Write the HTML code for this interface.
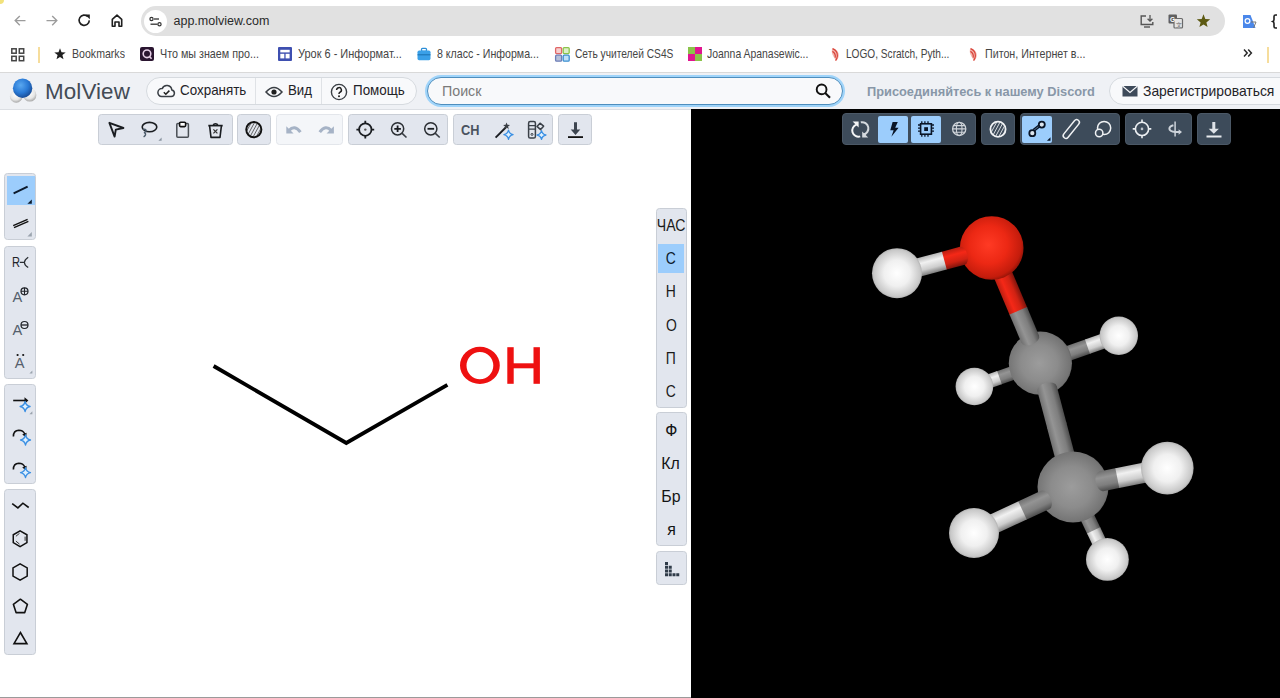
<!DOCTYPE html>
<html><head><meta charset="utf-8"><style>
html,body{margin:0;padding:0;width:1280px;height:698px;overflow:hidden;background:#fff;font-family:"Liberation Sans", sans-serif;}
svg{display:block}
</style></head><body>
<svg style="position:absolute;left:0px;top:0px;overflow:visible;" width="8" height="8" viewBox="0 0 8 8"><circle cx="0" cy="0" r="4" fill="#f2e27c"/></svg>
<svg style="position:absolute;left:12px;top:12px;overflow:visible;" width="16" height="16" viewBox="0 0 16 16"><path d="M13.5 8.6H3.2M7.8 4 3.2 8.6l4.6 4.6" fill="none" stroke="#9c9c9c" stroke-width="1.4"/></svg>
<svg style="position:absolute;left:44px;top:12px;overflow:visible;" width="16" height="16" viewBox="0 0 16 16"><path d="M2.5 8.6h10.3M8.2 4l4.6 4.6-4.6 4.6" fill="none" stroke="#9c9c9c" stroke-width="1.4"/></svg>
<svg style="position:absolute;left:76px;top:12px;overflow:visible;" width="16" height="16" viewBox="0 0 16 16"><path d="M13.3 8.4A5.1 5.1 0 1 1 11.8 4.6" fill="none" stroke="#1f1f1f" stroke-width="1.6"/><path d="M9.2 2.6h4.6v4.6z" fill="#1f1f1f"/></svg>
<svg style="position:absolute;left:109px;top:12px;overflow:visible;" width="16" height="16" viewBox="0 0 16 16"><path d="M3.3 14.2V7.4L8 3.2l4.7 4.2v6.8H10V10H6v4.2z" fill="none" stroke="#1f1f1f" stroke-width="1.6" stroke-linejoin="round"/></svg>
<div style="position:absolute;left:141px;top:6px;width:1084px;height:30px;background:#e1e1e1;border-radius:15px;"></div>
<svg style="position:absolute;left:144px;top:9.5px;overflow:visible;" width="23" height="23" viewBox="0 0 23 23"><circle cx="11.5" cy="11.5" r="11.5" fill="#fff"/><circle cx="7.5" cy="9" r="1.6" fill="none" stroke="#333" stroke-width="1.2"/><path d="M10 9h5" stroke="#333" stroke-width="1.3"/><circle cx="15.5" cy="14.2" r="1.6" fill="none" stroke="#333" stroke-width="1.2"/><path d="M6.5 14.2h7" stroke="#333" stroke-width="1.3"/></svg>
<div style="position:absolute;left:173.5px;top:14.29px;font-size:12.5px;line-height:14.36px;color:#2a2a2a;font-weight:400;white-space:nowrap;">app.molview.com</div>
<svg style="position:absolute;left:1139px;top:14px;overflow:visible;" width="16" height="14" viewBox="0 0 16 14"><path d="M7 2H2.2v8.5h11.6V8" fill="none" stroke="#555" stroke-width="1.4"/><path d="M5 13h6" stroke="#555" stroke-width="1.4"/><path d="M11 1v6M8.6 4.8 11 7.2l2.4-2.4" fill="none" stroke="#555" stroke-width="1.3"/></svg>
<svg style="position:absolute;left:1168px;top:14px;overflow:visible;" width="15" height="14" viewBox="0 0 15 14"><rect x="0.5" y="0.5" width="8.5" height="9" rx="1" fill="#5f5f5f"/><rect x="6" y="4.5" width="8.5" height="9.5" rx="1" fill="#e4e4e4" stroke="#6a6a6a" stroke-width="1.2"/><text x="2" y="8" font-size="6.5" font-weight="700" fill="#fff" font-family="Liberation Sans">G</text><text x="8" y="12.5" font-size="6" fill="#6a6a6a" font-family="Liberation Sans">文</text></svg>
<svg style="position:absolute;left:1196px;top:14px;overflow:visible;" width="15" height="13" viewBox="0 0 15 13"><path d="M7.5 0.3 9.3 4.9 14.2 5.2 10.4 8.4 11.6 13.1 7.5 10.5 3.4 13.1 4.6 8.4 0.8 5.2 5.7 4.9z" fill="#5d5a12"/></svg>
<svg style="position:absolute;left:1242px;top:14px;overflow:visible;" width="15" height="15" viewBox="0 0 15 15"><path d="M1 1h7.5l5 13H1z" fill="#4a87ea"/><circle cx="5.5" cy="7" r="2.4" fill="none" stroke="#fff" stroke-width="1.2"/><path d="M9 8h5l-2.5 6" fill="none" stroke="#777" stroke-width="1"/></svg>
<svg style="position:absolute;left:1272px;top:14px;overflow:visible;" width="10" height="15" viewBox="0 0 10 15"><path d="M5 1H3.5Q2 1 2 2.5v3Q2 7 0.8 7.5 2 8 2 9.5v3Q2 14 3.5 14H5" fill="none" stroke="#1f1f1f" stroke-width="1.6"/></svg>
<svg style="position:absolute;left:11px;top:48px;overflow:visible;" width="14" height="14" viewBox="0 0 14 14"><rect x="0.8" y="0.8" width="4.4" height="4.4" fill="none" stroke="#444" stroke-width="1.5"/><rect x="0.8" y="8.3" width="4.4" height="4.4" fill="none" stroke="#444" stroke-width="1.5"/><rect x="8.3" y="0.8" width="4.4" height="4.4" fill="none" stroke="#444" stroke-width="1.5"/><rect x="8.3" y="8.3" width="4.4" height="4.4" fill="none" stroke="#444" stroke-width="1.5"/></svg>
<div style="position:absolute;left:38px;top:47px;width:1.6px;height:16px;background:#f6dd9c;"></div>
<svg style="position:absolute;left:54px;top:48.2px;overflow:visible;" width="12" height="12" viewBox="0 0 12 12"><path d="M6 0.3 7.5 4.3 11.7 4.5 8.4 7.1 9.5 11.3 6 8.9 2.5 11.3 3.6 7.1 0.3 4.5 4.5 4.3z" fill="#1f1f1f"/></svg>
<div style="position:absolute;left:72px;top:47.16px;font-size:12.2px;line-height:14.02px;color:#454545;font-weight:400;white-space:nowrap;transform:scaleX(0.8686);transform-origin:0 0;">Bookmarks</div>
<svg style="position:absolute;left:140px;top:47px;overflow:visible;" width="14" height="14" viewBox="0 0 14 14"><rect width="14" height="14" rx="2" fill="#2a1530"/><circle cx="7" cy="6.8" r="3.8" fill="none" stroke="#e7d0e8" stroke-width="1.6"/><path d="M9.3 9.4l2.3 2.4" stroke="#e7d0e8" stroke-width="1.6"/></svg>
<div style="position:absolute;left:159.5px;top:47.16px;font-size:12.2px;line-height:14.02px;color:#454545;font-weight:400;white-space:nowrap;transform:scaleX(0.8814);transform-origin:0 0;">Что мы знаем про...</div>
<svg style="position:absolute;left:278px;top:47px;overflow:visible;" width="14" height="14" viewBox="0 0 14 14"><rect width="14" height="14" rx="1" fill="#3e4fb0"/><rect x="2.3" y="2.8" width="9.4" height="2.6" fill="#fff"/><rect x="2.3" y="6.8" width="4" height="4.6" fill="#fff"/><rect x="7.6" y="6.8" width="4" height="4.6" fill="#fff"/></svg>
<div style="position:absolute;left:297.5px;top:47.16px;font-size:12.2px;line-height:14.02px;color:#454545;font-weight:400;white-space:nowrap;transform:scaleX(0.9000);transform-origin:0 0;">Урок 6 - Информат...</div>
<svg style="position:absolute;left:417px;top:47px;overflow:visible;" width="14" height="14" viewBox="0 0 14 14"><rect x="4.5" y="1.3" width="5" height="3" rx="1" fill="none" stroke="#2d8fd8" stroke-width="1.3"/><rect x="0.5" y="3.6" width="13" height="9.6" rx="1.6" fill="#3aa0e8"/><rect x="0.5" y="7.3" width="13" height="1" fill="#1a6fb0"/></svg>
<div style="position:absolute;left:436.5px;top:47.16px;font-size:12.2px;line-height:14.02px;color:#454545;font-weight:400;white-space:nowrap;transform:scaleX(0.8714);transform-origin:0 0;">8 класс - Информа...</div>
<svg style="position:absolute;left:555px;top:47px;overflow:visible;" width="15" height="15" viewBox="0 0 15 15"><rect x="0.6" y="0.6" width="6" height="6" rx="1" fill="#f6d0d0" stroke="#e06666" stroke-width="1.3"/><rect x="8.2" y="0.6" width="6" height="6" rx="1" fill="#dcefc8" stroke="#8bc34a" stroke-width="1.3"/><rect x="0.6" y="8.2" width="6" height="6" rx="1" fill="#b8c0d8" stroke="#6d7fb8" stroke-width="1.3"/><rect x="8.2" y="8.2" width="6" height="6" rx="1" fill="#bfe0f8" stroke="#3d8fd0" stroke-width="1.3"/></svg>
<div style="position:absolute;left:574.5px;top:47.16px;font-size:12.2px;line-height:14.02px;color:#454545;font-weight:400;white-space:nowrap;transform:scaleX(0.8376);transform-origin:0 0;">Сеть учителей CS4S</div>
<svg style="position:absolute;left:688px;top:47px;overflow:visible;" width="14" height="14" viewBox="0 0 14 14"><rect width="14" height="14" fill="#e0158f"/><rect x="0" y="0" width="7" height="7" fill="#8bc34a"/><rect x="7" y="7" width="7" height="7" fill="#8bc34a"/></svg>
<div style="position:absolute;left:707px;top:47.16px;font-size:12.2px;line-height:14.02px;color:#454545;font-weight:400;white-space:nowrap;transform:scaleX(0.8551);transform-origin:0 0;">Joanna Apanasewic...</div>
<svg style="position:absolute;left:828.5px;top:46.5px;overflow:visible;" width="13" height="15" viewBox="0 0 13 15"><path d="M3.2 1.2C7.5 1.8 10 5 9.8 8.6 9.6 11.6 8 13.4 6.6 14 6.8 12.4 4.6 10 3.4 7.4 2.6 5.4 2.6 3.2 3.2 1.2z" fill="#f3b8b0"/><path d="M3.6 1.6C7 3 8.6 6 8.4 9 8.2 11 7.4 12.6 6.6 13.6M3.4 4.4C5.6 5.6 6.6 8 6.2 10.6" fill="none" stroke="#d9443a" stroke-width="1.2"/></svg>
<div style="position:absolute;left:845.5px;top:47.16px;font-size:12.2px;line-height:14.02px;color:#454545;font-weight:400;white-space:nowrap;transform:scaleX(0.8296);transform-origin:0 0;">LOGO, Scratch, Pyth...</div>
<svg style="position:absolute;left:966.5px;top:46.5px;overflow:visible;" width="13" height="15" viewBox="0 0 13 15"><path d="M3.2 1.2C7.5 1.8 10 5 9.8 8.6 9.6 11.6 8 13.4 6.6 14 6.8 12.4 4.6 10 3.4 7.4 2.6 5.4 2.6 3.2 3.2 1.2z" fill="#f3b8b0"/><path d="M3.6 1.6C7 3 8.6 6 8.4 9 8.2 11 7.4 12.6 6.6 13.6M3.4 4.4C5.6 5.6 6.6 8 6.2 10.6" fill="none" stroke="#d9443a" stroke-width="1.2"/></svg>
<div style="position:absolute;left:984.5px;top:47.16px;font-size:12.2px;line-height:14.02px;color:#454545;font-weight:400;white-space:nowrap;transform:scaleX(0.8769);transform-origin:0 0;">Питон, Интернет в...</div>
<svg style="position:absolute;left:1243px;top:48px;overflow:visible;" width="10" height="10" viewBox="0 0 10 10"><path d="M1 1.5 4.2 5 1 8.5M5.2 1.5 8.4 5 5.2 8.5" fill="none" stroke="#2a2a2a" stroke-width="1.5"/></svg>
<div style="position:absolute;left:1267px;top:47px;width:1.6px;height:16px;background:#f6dd9c;"></div>
<div style="position:absolute;left:0px;top:72px;width:1280px;height:1px;background:#d9d9d9;"></div>
<div style="position:absolute;left:0px;top:73px;width:1280px;height:36px;background:#eff1f5;"></div>
<div style="position:absolute;left:0px;top:109px;width:691px;height:1px;background:#dcdfe4;"></div>
<svg style="position:absolute;left:0px;top:74px;overflow:visible;" width="46" height="32" viewBox="0 0 46 32"><defs>
<radialGradient id="lb" cx="0.4" cy="0.35" r="0.65"><stop offset="0" stop-color="#5aa8f0"/><stop offset="0.6" stop-color="#2a7ad6"/><stop offset="1" stop-color="#1a4f9a"/></radialGradient>
<radialGradient id="lw" cx="0.45" cy="0.35" r="0.7"><stop offset="0" stop-color="#ffffff"/><stop offset="0.6" stop-color="#e6e6e6"/><stop offset="1" stop-color="#9a9a9a"/></radialGradient></defs>
<circle cx="16.2" cy="22.4" r="6.3" fill="url(#lw)"/><circle cx="29.8" cy="21" r="6.6" fill="url(#lw)"/><circle cx="22.6" cy="14.2" r="9.7" fill="url(#lb)"/></svg>
<div style="position:absolute;left:45px;top:78.53px;font-size:22.4px;line-height:25.74px;color:#434b55;font-weight:400;white-space:nowrap;letter-spacing:0.1px;">MolView</div>
<div style="position:absolute;left:145.5px;top:77px;width:271.5px;height:28px;box-sizing:border-box;background:#f8f9fb;border:1px solid #d6dadf;border-radius:14px;"></div>
<div style="position:absolute;left:255px;top:78px;width:1px;height:26px;background:#dfe2e6;"></div>
<div style="position:absolute;left:321px;top:78px;width:1px;height:26px;background:#dfe2e6;"></div>
<svg style="position:absolute;left:157px;top:84px;overflow:visible;" width="19" height="14" viewBox="0 0 19 14"><path d="M4.6 12.6h9.6a3.4 3.4 0 0 0 .6-6.7 5 5 0 0 0-9.6-1.3A4 4 0 0 0 4.6 12.6z" fill="none" stroke="#3a3f45" stroke-width="1.5" stroke-linejoin="round"/><path d="M6.8 8.3l2 1.9 3.6-3.6" fill="none" stroke="#1f1f1f" stroke-width="1.5"/></svg>
<div style="position:absolute;left:180.3px;top:83.22px;font-size:13.9px;line-height:15.97px;color:#1f2328;font-weight:400;white-space:nowrap;transform:scaleX(0.9646);transform-origin:0 0;">Сохранять</div>
<svg style="position:absolute;left:265px;top:86px;overflow:visible;" width="18" height="12" viewBox="0 0 18 12"><path d="M1 6Q9-3 17 6 9 15 1 6z" fill="none" stroke="#3a3f45" stroke-width="1.5"/><circle cx="9" cy="6" r="2.6" fill="#1f1f1f"/></svg>
<div style="position:absolute;left:288.3px;top:83.22px;font-size:13.9px;line-height:15.97px;color:#1f2328;font-weight:400;white-space:nowrap;transform:scaleX(0.9543);transform-origin:0 0;">Вид</div>
<svg style="position:absolute;left:330px;top:82.5px;overflow:visible;" width="18" height="18" viewBox="0 0 18 18"><circle cx="9" cy="9" r="7.6" fill="none" stroke="#3a3f45" stroke-width="1.4"/><path d="M6.6 7a2.4 2.4 0 1 1 3.4 2.2c-.8.4-1 .9-1 1.7" fill="none" stroke="#1f1f1f" stroke-width="1.5"/><circle cx="9" cy="13.2" r="1" fill="#1f1f1f"/></svg>
<div style="position:absolute;left:353.3px;top:83.22px;font-size:13.9px;line-height:15.97px;color:#1f2328;font-weight:400;white-space:nowrap;transform:scaleX(0.9649);transform-origin:0 0;">Помощь</div>
<div style="position:absolute;left:427px;top:77px;width:416px;height:28px;box-sizing:border-box;background:#f8f9fb;border:1px solid #4f8ebd;border-radius:14px;box-shadow:0 0 0 2px #9fd4fa;"></div>
<div style="position:absolute;left:442.3px;top:82.65px;font-size:14.2px;line-height:16.32px;color:#7a7a7a;font-weight:400;white-space:nowrap;transform:scaleX(1.0038);transform-origin:0 0;">Поиск</div>
<svg style="position:absolute;left:814px;top:82px;overflow:visible;" width="18" height="18" viewBox="0 0 18 18"><circle cx="7.6" cy="7.4" r="4.9" fill="none" stroke="#111" stroke-width="1.9"/><path d="M11.2 11l4.8 4.8" stroke="#111" stroke-width="2.1"/></svg>
<div style="position:absolute;left:866.5px;top:83.59px;font-size:13.6px;line-height:15.63px;color:#8897a8;font-weight:700;white-space:nowrap;transform:scaleX(0.9419);transform-origin:0 0;">Присоединяйтесь к нашему Discord</div>
<div style="position:absolute;left:1109px;top:77px;width:300px;height:28px;box-sizing:border-box;background:#f8f9fb;border:1px solid #d6dadf;border-radius:14px;"></div>
<svg style="position:absolute;left:1122px;top:85px;overflow:visible;" width="16" height="12" viewBox="0 0 16 12"><rect x="0.5" y="1" width="15" height="10.5" fill="#3e4a5a"/><path d="M0.5 1 8 7.5 15.5 1" fill="none" stroke="#f8f9fb" stroke-width="1.1"/></svg>
<div style="position:absolute;left:1143.3px;top:82.95px;font-size:14.2px;line-height:16.32px;color:#1f2328;font-weight:400;white-space:nowrap;transform:scaleX(0.9794);transform-origin:0 0;">Зарегистрироваться</div>
<div style="position:absolute;left:0px;top:110px;width:691px;height:588px;background:#ffffff;"></div>
<div style="position:absolute;left:0px;top:697px;width:691px;height:1px;background:#9a9a9a;"></div>
<div style="position:absolute;left:691px;top:109px;width:589px;height:589px;background:#000000;"></div>
<div style="position:absolute;left:98px;top:114px;width:135px;height:31px;box-sizing:border-box;background:#e2e6ee;border:1px solid #c9ced6;border-radius:3.5px;"></div>
<div style="position:absolute;left:237px;top:114px;width:34px;height:31px;box-sizing:border-box;background:#e2e6ee;border:1px solid #c9ced6;border-radius:3.5px;"></div>
<div style="position:absolute;left:276px;top:114px;width:67px;height:31px;box-sizing:border-box;background:#f4f6f9;border:1px solid #e3e6eb;border-radius:3.5px;"></div>
<div style="position:absolute;left:348px;top:114px;width:100px;height:31px;box-sizing:border-box;background:#e2e6ee;border:1px solid #c9ced6;border-radius:3.5px;"></div>
<div style="position:absolute;left:453px;top:114px;width:100px;height:31px;box-sizing:border-box;background:#e2e6ee;border:1px solid #c9ced6;border-radius:3.5px;"></div>
<div style="position:absolute;left:558px;top:114px;width:34px;height:31px;box-sizing:border-box;background:#e2e6ee;border:1px solid #c9ced6;border-radius:3.5px;"></div>
<svg style="position:absolute;left:100px;top:114px;overflow:visible;" width="33" height="31" viewBox="0 0 33 31"><path d="M9.4 8.8 23.4 14 15.8 15.6 14.6 22.6z" fill="none" stroke="#1a1d21" stroke-width="1.9" stroke-linejoin="round"/></svg>
<svg style="position:absolute;left:133px;top:114px;overflow:visible;" width="33" height="31" viewBox="0 0 33 31"><ellipse cx="16.5" cy="13.1" rx="7.3" ry="4.7" fill="none" stroke="#1a1d21" stroke-width="1.6"/><path d="M10 15.4c1.6-.6 3.4.2 3 1.8-.3 1-1.4 1.2-2 1.4 1.2.2 1.8 1.2 1.4 2.4-.3.8-1 1.4-1.8 1.8" fill="none" stroke="#4b5a6a" stroke-width="1.5"/><path d="M28.6 26.8v-3.2l-3.2 3.2z" fill="#8a94a0"/></svg>
<svg style="position:absolute;left:166px;top:114px;overflow:visible;" width="33" height="31" viewBox="0 0 33 31"><rect x="10.8" y="9.6" width="11.6" height="13.6" rx="1" fill="none" stroke="#4a4f55" stroke-width="1.5"/><rect x="13.6" y="8.2" width="6" height="4.4" rx="1" fill="#fff" stroke="#111" stroke-width="1.6"/></svg>
<svg style="position:absolute;left:199px;top:114px;overflow:visible;" width="33" height="31" viewBox="0 0 33 31"><path d="M9.3 11.6h14.4" stroke="#1a1d21" stroke-width="1.7"/><path d="M14.2 11.4a2.4 2.4 0 0 1 4.6 0" fill="none" stroke="#1a1d21" stroke-width="1.6"/><path d="M10.6 11.8 12 23.4h9l1.4-11.6" fill="none" stroke="#1a1d21" stroke-width="1.6" stroke-linejoin="round"/><path d="M14.4 15.4l4 4m0-4-4 4" stroke="#333" stroke-width="1.2"/></svg>
<svg style="position:absolute;left:237px;top:114px;overflow:visible;" width="34" height="31" viewBox="0 0 34 31"><clipPath id="hc1"><circle cx="16.8" cy="15.6" r="7"/></clipPath><g clip-path="url(#hc1)" stroke="#555" stroke-width="0.9"><path d="M-1.6000000000000014 26 L10.399999999999999 4"/><path d="M1.5999999999999996 26 L13.6 4"/><path d="M4.8 26 L16.8 4"/><path d="M8.0 26 L20.0 4"/><path d="M11.2 26 L23.2 4"/><path d="M14.4 26 L26.4 4"/><path d="M17.6 26 L29.6 4"/><path d="M20.8 26 L32.8 4"/></g><circle cx="16.8" cy="15.6" r="7.6" fill="none" stroke="#111" stroke-width="1.9"/></svg>
<svg style="position:absolute;left:276px;top:114px;overflow:visible;" width="67" height="31" viewBox="0 0 67 31"><g id="und"><path d="M10.3 12.2V19.6H17.6z" fill="#a6b3c6"/><path d="M13 16.6Q18.5 10.2 24.4 18.2" fill="none" stroke="#a6b3c6" stroke-width="3.1"/></g><g transform="translate(68.15 0) scale(-1 1)"><path d="M10.3 12.2V19.6H17.6z" fill="#a6b3c6"/><path d="M13 16.6Q18.5 10.2 24.4 18.2" fill="none" stroke="#a6b3c6" stroke-width="3.1"/></g></svg>
<svg style="position:absolute;left:348px;top:114px;overflow:visible;" width="100" height="31" viewBox="0 0 100 31"><circle cx="17.3" cy="15.6" r="6.2" fill="none" stroke="#1a1d21" stroke-width="1.8"/><path d="M17.3 6.7v2.8M17.3 21.7v2.8M8.4 15.6h2.8M23.4 15.6h2.8" stroke="#1a1d21" stroke-width="1.8"/><circle cx="17.3" cy="15.6" r="1.2" fill="#555"/><circle cx="49.6" cy="14.8" r="6.1" fill="none" stroke="#2a2e33" stroke-width="1.5"/><path d="M46.3 14.8h6.6M49.6 11.5v6.6" stroke="#1a1d21" stroke-width="1.8"/><path d="M53.9 19.1l4.6 4.4" stroke="#3a3f45" stroke-width="1.6"/><circle cx="82.8" cy="14.8" r="6.1" fill="none" stroke="#2a2e33" stroke-width="1.5"/><path d="M79.5 14.8h6.6" stroke="#1a1d21" stroke-width="1.8"/><path d="M87.1 19.1l4.6 4.4" stroke="#3a3f45" stroke-width="1.6"/></svg>
<div style="position:absolute;left:461px;top:121.44px;font-size:15.2px;line-height:17.46px;color:#4a5360;font-weight:700;white-space:nowrap;transform:scaleX(0.84);transform-origin:0 0;">CH</div>
<svg style="position:absolute;left:453px;top:114px;overflow:visible;" width="100" height="31" viewBox="0 0 100 31"><path d="M42.6 23.6 53.2 13" stroke="#1a1d21" stroke-width="1.9"/><path d="M53.5 8.4l1 2.3 2.5.2-1.9 1.6.6 2.4-2.2-1.3-2.1 1.3.6-2.4-1.9-1.6 2.5-.2z" fill="#3a3f45"/><path d="M55.5 16.1Q56.328 19.872 60.1 20.7Q56.328 21.528 55.5 25.299999999999997Q54.672 21.528 50.9 20.7Q54.672 19.872 55.5 16.1z" fill="#dff1ff" stroke="#3a8fe3" stroke-width="1.3" stroke-linejoin="round"/><rect x="75.6" y="7.6" width="6.8" height="16.4" rx="1.6" fill="none" stroke="#3a4048" stroke-width="1.5"/><path d="M75.6 11.6h6.8M75.6 15.2h6.8" stroke="#3a4048" stroke-width="1.3"/><circle cx="79" cy="20.4" r="1" fill="none" stroke="#3a4048" stroke-width="1"/><path d="M84 12.4l3-3.2 3.6 3-3 3.4z" fill="none" stroke="#3a4048" stroke-width="1.5" stroke-linejoin="round"/><path d="M88.5 16.6Q89.292 20.208 92.9 21Q89.292 21.792 88.5 25.4Q87.708 21.792 84.1 21Q87.708 20.208 88.5 16.6z" fill="#dff1ff" stroke="#3a8fe3" stroke-width="1.3" stroke-linejoin="round"/></svg>
<svg style="position:absolute;left:558px;top:114px;overflow:visible;" width="34" height="31" viewBox="0 0 34 31"><path d="M16 8.3h3v7.2h3.3L17.5 21 12.7 15.5H16z" fill="#3d4550"/><rect x="10" y="22.2" width="15" height="1.8" fill="#111"/></svg>
<div style="position:absolute;left:4px;top:173px;width:32px;height:67px;box-sizing:border-box;background:#e2e6ee;border:1px solid #c9ced6;border-radius:3.5px;"></div>
<div style="position:absolute;left:7px;top:175.7px;width:27.5px;height:29.3px;background:#9ccdfc;"></div>
<div style="position:absolute;left:4px;top:246px;width:32px;height:133px;box-sizing:border-box;background:#e2e6ee;border:1px solid #c9ced6;border-radius:3.5px;"></div>
<div style="position:absolute;left:4px;top:384px;width:32px;height:100px;box-sizing:border-box;background:#e2e6ee;border:1px solid #c9ced6;border-radius:3.5px;"></div>
<div style="position:absolute;left:4px;top:489px;width:32px;height:166px;box-sizing:border-box;background:#e2e6ee;border:1px solid #c9ced6;border-radius:3.5px;"></div>
<svg style="position:absolute;left:4px;top:173px;overflow:visible;" width="32" height="67" viewBox="0 0 32 67"><path d="M9.6 20.3 23.6 13.6" stroke="#0c1a2c" stroke-width="2"/><path d="M27.8 30.8v-4.4l-4.4 4.4z" fill="#0c1a2c"/><path d="M9.2 52.6 23.6 46.4M10 54.6 24.4 48.4" stroke="#111" stroke-width="1.4"/><path d="M27.8 63.4v-4.4l-4.4 4.4z" fill="#9aa3ad"/></svg>
<div style="position:absolute;left:12.3px;top:254.51px;font-size:13.8px;line-height:15.86px;color:#1f2328;font-weight:400;white-space:nowrap;transform:scaleX(0.8027);transform-origin:0 0;">R</div>
<svg style="position:absolute;left:4px;top:246px;overflow:visible;" width="32" height="133" viewBox="0 0 32 133"><path d="M15.8 16.4h4.4M24.2 11.2q-3.8 2.6-3.8 5.2t3.8 5.2" fill="none" stroke="#2a2e33" stroke-width="1.2"/><circle cx="20.5" cy="45.3" r="3.5" fill="none" stroke="#1f2328" stroke-width="1.2"/><path d="M17 45.3h7M20.5 41.8v7" stroke="#1f2328" stroke-width="1.1"/><circle cx="20.5" cy="79" r="3.5" fill="none" stroke="#1f2328" stroke-width="1.2"/><path d="M17 79h7" stroke="#1f2328" stroke-width="1.3"/><circle cx="13.6" cy="109" r="1.1" fill="#111"/><circle cx="19.2" cy="109" r="1.1" fill="#111"/><path d="M28.4 127.6v-3l-3 3z" fill="#9aa3ad"/></svg>
<div style="position:absolute;left:12.4px;top:289.49px;font-size:14.6px;line-height:16.78px;color:#55606c;font-weight:400;white-space:nowrap;">A</div>
<div style="position:absolute;left:12.4px;top:322.39px;font-size:14.6px;line-height:16.78px;color:#55606c;font-weight:400;white-space:nowrap;">A</div>
<div style="position:absolute;left:14.8px;top:355.49px;font-size:14.6px;line-height:16.78px;color:#55606c;font-weight:400;white-space:nowrap;">A</div>
<svg style="position:absolute;left:4px;top:384px;overflow:visible;" width="32" height="100" viewBox="0 0 32 100"><path d="M9.2 16.5h13" stroke="#111" stroke-width="1.6"/><path d="M20.5 13.3 24.4 16.5 20.5 19.7z" fill="#111"/><path d="M21.1 17.5Q22.0 21.6 26.1 22.5Q22.0 23.4 21.1 27.5Q20.200000000000003 23.4 16.1 22.5Q20.200000000000003 21.6 21.1 17.5z" fill="#dff1ff" stroke="#3a8fe3" stroke-width="1.3" stroke-linejoin="round"/><path d="M28.4 30.2v-3l-3 3z" fill="#9aa3ad"/><path d="M9.4 52.4q0-6 5.4-6.2 4.4 0 6 3.8" fill="none" stroke="#111" stroke-width="1.6"/><path d="M18.2 50.4l4.4-1.6-.4 4.8z" fill="#111"/><path d="M21.5 51Q22.4 55.1 26.5 56Q22.4 56.9 21.5 61Q20.6 56.9 16.5 56Q20.6 55.1 21.5 51z" fill="#dff1ff" stroke="#3a8fe3" stroke-width="1.3" stroke-linejoin="round"/><path d="M9.4 85.4q0-6 5.4-6.2 4.4 0 6 3.8" fill="none" stroke="#111" stroke-width="1.6"/><path d="M18.2 83.4l4.4-1.6-.4 4.8z" fill="#111"/><path d="M21.5 83.7Q22.4 87.8 26.5 88.7Q22.4 89.60000000000001 21.5 93.7Q20.6 89.60000000000001 16.5 88.7Q20.6 87.8 21.5 83.7z" fill="#dff1ff" stroke="#3a8fe3" stroke-width="1.3" stroke-linejoin="round"/></svg>
<svg style="position:absolute;left:4px;top:489px;overflow:visible;" width="32" height="166" viewBox="0 0 32 166"><path d="M8.2 14.6 13.9 18.9 18.9 14.2 24.7 18.5" fill="none" stroke="#111" stroke-width="1.6"/><polygon points="16.10,41.80 22.94,45.75 22.94,53.65 16.10,57.60 9.26,53.65 9.26,45.75" fill="none" stroke="#111" stroke-width="1.5"/><path d="M21.1 47.6V51.8M11.9 47.3 15.5 44.3M15.5 55.1 11.9 52.1" stroke="#333" stroke-width="1"/><polygon points="16.10,74.80 23.20,78.90 23.20,87.10 16.10,91.20 9.00,87.10 9.00,78.90" fill="none" stroke="#111" stroke-width="1.5"/><polygon points="16.40,110.20 23.44,115.31 20.75,123.59 12.05,123.59 9.36,115.31" fill="none" stroke="#111" stroke-width="1.6" stroke-linejoin="round"/><path d="M16.4 143.5 22.9 154.6H10z" fill="none" stroke="#111" stroke-width="1.6"/></svg>
<div style="position:absolute;left:655.5px;top:208px;width:31.5px;height:199.5px;box-sizing:border-box;background:#e2e6ee;border:1px solid #c9ced6;border-radius:3.5px;"></div>
<div style="position:absolute;left:658.2px;top:244px;width:26.2px;height:28.8px;background:#9ccdfc;"></div>
<div style="position:absolute;left:655.5px;top:412px;width:31.5px;height:133.5px;box-sizing:border-box;background:#e2e6ee;border:1px solid #c9ced6;border-radius:3.5px;"></div>
<div style="position:absolute;left:655.5px;top:551px;width:31.5px;height:33.5px;box-sizing:border-box;background:#e2e6ee;border:1px solid #c9ced6;border-radius:3.5px;"></div>
<div style="position:absolute;left:653.82px;width:34.17px;top:215.60px;font-size:16.8px;line-height:19.30px;color:#1a1a1a;white-space:nowrap;transform:scaleX(0.84);transform-origin:50% 0;">ЧАС</div>
<div style="position:absolute;left:665.35px;width:11.70px;top:248.64px;font-size:16.2px;line-height:18.61px;color:#0c1a2c;white-space:nowrap;transform:scaleX(0.86);transform-origin:50% 0;">C</div>
<div style="position:absolute;left:665.35px;width:11.70px;top:282.44px;font-size:16.2px;line-height:18.61px;color:#1a1a1a;white-space:nowrap;transform:scaleX(0.86);transform-origin:50% 0;">H</div>
<div style="position:absolute;left:664.90px;width:12.60px;top:315.74px;font-size:16.2px;line-height:18.61px;color:#1a1a1a;white-space:nowrap;transform:scaleX(0.86);transform-origin:50% 0;">O</div>
<div style="position:absolute;left:665.38px;width:11.64px;top:348.94px;font-size:16.2px;line-height:18.61px;color:#1a1a1a;white-space:nowrap;transform:scaleX(0.86);transform-origin:50% 0;">П</div>
<div style="position:absolute;left:665.35px;width:11.70px;top:381.94px;font-size:16.2px;line-height:18.61px;color:#1a1a1a;white-space:nowrap;transform:scaleX(0.86);transform-origin:50% 0;">C</div>
<div style="position:absolute;left:664.77px;width:12.47px;top:420.76px;font-size:16.4px;line-height:18.84px;color:#141414;white-space:nowrap;transform:scaleX(0.97);transform-origin:50% 0;">Ф</div>
<div style="position:absolute;left:661.44px;width:19.12px;top:453.76px;font-size:16.4px;line-height:18.84px;color:#141414;white-space:nowrap;transform:scaleX(0.97);transform-origin:50% 0;">Кл</div>
<div style="position:absolute;left:661.06px;width:19.88px;top:486.76px;font-size:16.4px;line-height:18.84px;color:#141414;white-space:nowrap;transform:scaleX(0.97);transform-origin:50% 0;">Бр</div>
<div style="position:absolute;left:666.56px;width:8.88px;top:519.76px;font-size:16.4px;line-height:18.84px;color:#141414;white-space:nowrap;transform:scaleX(0.97);transform-origin:50% 0;">я</div>
<svg style="position:absolute;left:0px;top:0px;overflow:visible;" width="1" height="1" viewBox="0 0 1 1"><rect x="665.00" y="562.00" width="3" height="3" fill="#2f3b48"/><rect x="665.00" y="565.75" width="3" height="3" fill="#2f3b48"/><rect x="668.75" y="565.75" width="3" height="3" fill="#2f3b48"/><rect x="665.00" y="569.50" width="3" height="3" fill="#2f3b48"/><rect x="668.75" y="569.50" width="3" height="3" fill="#2f3b48"/><rect x="665.00" y="573.25" width="3" height="3" fill="#2f3b48"/><rect x="668.75" y="573.25" width="3" height="3" fill="#2f3b48"/><rect x="672.50" y="573.25" width="3" height="3" fill="#2f3b48"/><rect x="676.25" y="573.25" width="3" height="3" fill="#2f3b48"/></svg>
<svg style="position:absolute;left:0px;top:0px;overflow:visible;" width="1" height="1" viewBox="0 0 1 1"><polyline points="213.6,366 346.3,443 447.4,384.8" fill="none" stroke="#000" stroke-width="3.8" stroke-linejoin="miter"/><path d="M460 365.4a19.9 18.6 0 1 0 39.8 0a19.9 18.6 0 1 0-39.8 0zM466.5 365.6a13.4 13.6 0 1 1 26.8 0a13.4 13.6 0 1 1-26.8 0z" fill="#ee1111" fill-rule="evenodd"/><rect x="507.3" y="347.2" width="6.4" height="36.6" fill="#ee1111"/><rect x="533.5" y="347.2" width="6.4" height="36.6" fill="#ee1111"/><rect x="510" y="363.3" width="26" height="5" fill="#ee1111"/></svg>
<div style="position:absolute;left:842px;top:113px;width:134px;height:32px;box-sizing:border-box;background:#3d4b5a;border:1px solid #4b5866;border-radius:4px;"></div>
<div style="position:absolute;left:980.5px;top:113px;width:34px;height:32px;box-sizing:border-box;background:#3d4b5a;border:1px solid #4b5866;border-radius:4px;"></div>
<div style="position:absolute;left:1019.5px;top:113px;width:100.5px;height:32px;box-sizing:border-box;background:#3d4b5a;border:1px solid #4b5866;border-radius:4px;"></div>
<div style="position:absolute;left:1124.5px;top:113px;width:67px;height:32px;box-sizing:border-box;background:#3d4b5a;border:1px solid #4b5866;border-radius:4px;"></div>
<div style="position:absolute;left:1196.5px;top:113px;width:34px;height:32px;box-sizing:border-box;background:#3d4b5a;border:1px solid #4b5866;border-radius:4px;"></div>
<div style="position:absolute;left:877.8px;top:115.7px;width:30px;height:27.3px;background:#9ccdfc;border-radius:2px;"></div>
<div style="position:absolute;left:911.1px;top:115.7px;width:30px;height:27.3px;background:#9ccdfc;border-radius:2px;"></div>
<div style="position:absolute;left:1021.8px;top:115.6px;width:30px;height:27px;background:#9ccdfc;border-radius:2px;"></div>
<svg style="position:absolute;left:0px;top:0px;overflow:visible;" width="1" height="1" viewBox="0 0 1 1"><path d="M856.6 124.6A6.1 6.1 0 0 0 860.2 136.4" fill="none" stroke="#f4f5f6" stroke-width="2"/><path d="M852.6 121.4H858.6V127.4z" fill="#f4f5f6"/><path d="M860.8 122.3A6.1 6.1 0 0 1 863.4 134.6" fill="none" stroke="#d4d9de" stroke-width="2"/><path d="M862.2 131.6V137.6H868.2z" fill="#d4d9de"/><path d="M892.6 122 890.3 130.2h3.3l-2.2 6.6 7.2-9h-3.4l2.6-5.8z" fill="#0a1628"/><rect x="920.6" y="123.8" width="10.8" height="10.4" fill="none" stroke="#0a1628" stroke-width="1.6"/><rect x="924.2" y="127.2" width="3.8" height="3.8" fill="#0a1628"/><path d="M921.8 121.2v2.6M921.8 134.2v2.6M918 125.0h2.6M931.4 125.0h2.6" stroke="#0a1628" stroke-width="1.3"/><path d="M924.9 121.2v2.6M924.9 134.2v2.6M918 128.1h2.6M931.4 128.1h2.6" stroke="#0a1628" stroke-width="1.3"/><path d="M928.0 121.2v2.6M928.0 134.2v2.6M918 131.2h2.6M931.4 131.2h2.6" stroke="#0a1628" stroke-width="1.3"/><circle cx="959.2" cy="128.9" r="6.6" fill="none" stroke="#cfd4d9" stroke-width="1.3"/><ellipse cx="959.2" cy="128.9" rx="2.8" ry="6.6" fill="none" stroke="#cfd4d9" stroke-width="1.1"/><path d="M952.6 128.9h13.2M953.6 125.6h11.2M953.6 132.2h11.2" stroke="#cfd4d9" stroke-width="1.1"/><clipPath id="hc2"><circle cx="998" cy="129.3" r="7.2"/></clipPath><g clip-path="url(#hc2)" stroke="#d8dce0" stroke-width="1"><path d="M976.1 142 L990.1 116"/><path d="M979.4 142 L993.4 116"/><path d="M982.7 142 L996.7 116"/><path d="M986.0 142 L1000.0 116"/><path d="M989.3 142 L1003.3 116"/><path d="M992.6 142 L1006.6 116"/><path d="M995.9 142 L1009.9 116"/><path d="M999.2 142 L1013.2 116"/><path d="M1002.5 142 L1016.5 116"/></g><circle cx="998" cy="129.3" r="7.6" fill="none" stroke="#f0f2f4" stroke-width="1.8"/><path d="M1034.4 131 1039.8 126.6M1033.2 129.6 1038.6 125.2" stroke="#0a1628" stroke-width="1.4"/><circle cx="1032.3" cy="133.2" r="3" fill="#dde6ef" stroke="#0a1628" stroke-width="1.8"/><circle cx="1041.8" cy="124.6" r="3" fill="#dde6ef" stroke="#0a1628" stroke-width="1.8"/><path d="M1050.5 140.8v-3.6l-3.6 3.6z" fill="#0a1628"/><path d="M1066 135.6 1076.6 122.4" stroke="#f0f2f4" stroke-width="7" stroke-linecap="round"/><path d="M1066 135.6 1076.6 122.4" stroke="#3d4b5a" stroke-width="4" stroke-linecap="round"/><circle cx="1104.1" cy="128" r="6.6" fill="none" stroke="#f0f2f4" stroke-width="1.5"/><circle cx="1099.2" cy="133" r="3.7" fill="#3d4b5a" stroke="#f0f2f4" stroke-width="1.5"/><circle cx="1142" cy="128.9" r="6.6" fill="none" stroke="#eceff2" stroke-width="1.6"/><path d="M1142 119.6v2.6M1142 135.6v2.6M1132.7 128.9h2.6M1148.7 128.9h2.6" stroke="#eceff2" stroke-width="1.6"/><circle cx="1142" cy="128.9" r="1.3" fill="#c0c6cc"/><path d="M1175.1 121.4v15" stroke="#cdd3da" stroke-width="1.5"/><path d="M1173.4 125.2q-4 1-4 3.6t6 3.2h5" fill="none" stroke="#cdd3da" stroke-width="2"/><path d="M1178.6 129.2l3.4 2.8-3.4 2.8z" fill="#cdd3da"/><path d="M1212.3 122h3v6.8h3.6l-5.1 5-5.1-5h3.6z" fill="#dfe3e8"/><rect x="1206.5" y="135.5" width="15" height="2" fill="#e8ebee"/></svg>
<svg style="position:absolute;left:0px;top:0px;overflow:visible;" width="1" height="1" viewBox="0 0 1 1">
<radialGradient id="gR" cx="0.45" cy="0.45" r="0.6"><stop offset="0" stop-color="#ff3a24"/><stop offset="0.5" stop-color="#ec2814"/><stop offset="0.85" stop-color="#c41c0c"/><stop offset="1" stop-color="#7a1006"/></radialGradient>
<radialGradient id="gW" cx="0.5" cy="0.5" r="0.58"><stop offset="0" stop-color="#ffffff"/><stop offset="0.45" stop-color="#f0f0f0"/><stop offset="0.8" stop-color="#c8c8c8"/><stop offset="1" stop-color="#808080"/></radialGradient>
<radialGradient id="gG" cx="0.48" cy="0.5" r="0.58"><stop offset="0" stop-color="#9c9c9c"/><stop offset="0.5" stop-color="#8c8c8c"/><stop offset="0.85" stop-color="#747474"/><stop offset="1" stop-color="#4a4a4a"/></radialGradient>
<linearGradient id="bg1" x1="0" y1="1" x2="0" y2="0"><stop offset="0" stop-color="#4d4d4d"/><stop offset="0.3" stop-color="#7e7e7e"/><stop offset="0.68" stop-color="#949494"/><stop offset="1" stop-color="#707070"/></linearGradient><linearGradient id="bg2" x1="0" y1="1" x2="0" y2="0"><stop offset="0" stop-color="#7d7d7d"/><stop offset="0.3" stop-color="#cdcdcd"/><stop offset="0.68" stop-color="#f1f1f1"/><stop offset="1" stop-color="#b6b6b6"/></linearGradient><g transform="translate(1040.4 363.2) rotate(-19.329)"><rect x="0.00" y="-7.5" width="50.85" height="15" fill="url(#bg1)"/><rect x="49.85" y="-7.5" width="33.23" height="15" fill="url(#bg2)"/></g><linearGradient id="bg3" x1="0" y1="0" x2="0" y2="1"><stop offset="0" stop-color="#4d4d4d"/><stop offset="0.3" stop-color="#7e7e7e"/><stop offset="0.68" stop-color="#949494"/><stop offset="1" stop-color="#707070"/></linearGradient><linearGradient id="bg4" x1="0" y1="0" x2="0" y2="1"><stop offset="0" stop-color="#7d7d7d"/><stop offset="0.3" stop-color="#cdcdcd"/><stop offset="0.68" stop-color="#f1f1f1"/><stop offset="1" stop-color="#b6b6b6"/></linearGradient><g transform="translate(1040.4 363.2) rotate(160.555)"><rect x="0.00" y="-7.0" width="44.40" height="14" fill="url(#bg3)"/><rect x="43.40" y="-7.0" width="26.60" height="14" fill="url(#bg4)"/></g><circle cx="1118.8" cy="335.7" r="19.2" fill="url(#gW)"/><circle cx="974.4" cy="386.5" r="18.8" fill="url(#gW)"/><circle cx="1040.4" cy="363.2" r="31.6" fill="url(#gG)"/><linearGradient id="bg5" x1="0" y1="0" x2="0" y2="1"><stop offset="0" stop-color="#7f140c"/><stop offset="0.3" stop-color="#d02213"/><stop offset="0.68" stop-color="#f52817"/><stop offset="1" stop-color="#b91e11"/></linearGradient><linearGradient id="bg6" x1="0" y1="0" x2="0" y2="1"><stop offset="0" stop-color="#4d4d4d"/><stop offset="0.3" stop-color="#7e7e7e"/><stop offset="0.68" stop-color="#949494"/><stop offset="1" stop-color="#707070"/></linearGradient><g transform="translate(991.7 248) rotate(67.084)"><ellipse cx="99.18" cy="0" rx="5.32" ry="9.5" fill="url(#bg6)"/><rect x="0.00" y="-9.5" width="69.16" height="19" fill="url(#bg5)"/><rect x="68.16" y="-9.5" width="31.02" height="19" fill="url(#bg6)"/></g><linearGradient id="bg7" x1="0" y1="0" x2="0" y2="1"><stop offset="0" stop-color="#4d4d4d"/><stop offset="0.3" stop-color="#7e7e7e"/><stop offset="0.68" stop-color="#949494"/><stop offset="1" stop-color="#707070"/></linearGradient><linearGradient id="bg8" x1="0" y1="0" x2="0" y2="1"><stop offset="0" stop-color="#4d4d4d"/><stop offset="0.3" stop-color="#7e7e7e"/><stop offset="0.68" stop-color="#949494"/><stop offset="1" stop-color="#707070"/></linearGradient><g transform="translate(1040.4 363.2) rotate(75.247)"><ellipse cx="26.12" cy="0" rx="5.60" ry="10.0" fill="url(#bg7)"/><rect x="26.12" y="-10.0" width="38.89" height="20" fill="url(#bg7)"/><rect x="64.01" y="-10.0" width="64.01" height="20" fill="url(#bg8)"/></g><linearGradient id="bg9" x1="0" y1="0" x2="0" y2="1"><stop offset="0" stop-color="#4d4d4d"/><stop offset="0.3" stop-color="#7e7e7e"/><stop offset="0.68" stop-color="#949494"/><stop offset="1" stop-color="#707070"/></linearGradient><linearGradient id="bg10" x1="0" y1="0" x2="0" y2="1"><stop offset="0" stop-color="#7d7d7d"/><stop offset="0.3" stop-color="#cdcdcd"/><stop offset="0.68" stop-color="#f1f1f1"/><stop offset="1" stop-color="#b6b6b6"/></linearGradient><g transform="translate(1073 487) rotate(64.586)"><rect x="0.00" y="-7.25" width="49.09" height="14.5" fill="url(#bg9)"/><rect x="48.09" y="-7.25" width="32.06" height="14.5" fill="url(#bg10)"/></g><circle cx="1107.4" cy="559.4" r="21.4" fill="url(#gW)"/><circle cx="1073" cy="487" r="35.5" fill="url(#gG)"/><circle cx="991.7" cy="248" r="31.8" fill="url(#gR)"/><linearGradient id="bg11" x1="0" y1="0" x2="0" y2="1"><stop offset="0" stop-color="#7f140c"/><stop offset="0.3" stop-color="#d02213"/><stop offset="0.68" stop-color="#f52817"/><stop offset="1" stop-color="#b91e11"/></linearGradient><linearGradient id="bg12" x1="0" y1="0" x2="0" y2="1"><stop offset="0" stop-color="#7d7d7d"/><stop offset="0.3" stop-color="#cdcdcd"/><stop offset="0.68" stop-color="#f1f1f1"/><stop offset="1" stop-color="#b6b6b6"/></linearGradient><g transform="translate(991.7 248) rotate(165.099)"><ellipse cx="30.38" cy="0" rx="5.18" ry="9.25" fill="url(#bg11)"/><rect x="30.38" y="-9.25" width="19.62" height="18.5" fill="url(#bg11)"/><rect x="49.00" y="-9.25" width="49.00" height="18.5" fill="url(#bg12)"/></g><linearGradient id="bg13" x1="0" y1="1" x2="0" y2="0"><stop offset="0" stop-color="#4d4d4d"/><stop offset="0.3" stop-color="#7e7e7e"/><stop offset="0.68" stop-color="#949494"/><stop offset="1" stop-color="#707070"/></linearGradient><linearGradient id="bg14" x1="0" y1="1" x2="0" y2="0"><stop offset="0" stop-color="#7d7d7d"/><stop offset="0.3" stop-color="#cdcdcd"/><stop offset="0.68" stop-color="#f1f1f1"/><stop offset="1" stop-color="#b6b6b6"/></linearGradient><g transform="translate(1073 487) rotate(-11.333)"><ellipse cx="28.85" cy="0" rx="5.60" ry="10.0" fill="url(#bg13)"/><rect x="28.85" y="-10.0" width="17.35" height="20" fill="url(#bg13)"/><rect x="45.20" y="-10.0" width="50.97" height="20" fill="url(#bg14)"/></g><linearGradient id="bg15" x1="0" y1="0" x2="0" y2="1"><stop offset="0" stop-color="#4d4d4d"/><stop offset="0.3" stop-color="#7e7e7e"/><stop offset="0.68" stop-color="#949494"/><stop offset="1" stop-color="#707070"/></linearGradient><linearGradient id="bg16" x1="0" y1="0" x2="0" y2="1"><stop offset="0" stop-color="#7d7d7d"/><stop offset="0.3" stop-color="#cdcdcd"/><stop offset="0.68" stop-color="#f1f1f1"/><stop offset="1" stop-color="#b6b6b6"/></linearGradient><g transform="translate(1073 487) rotate(155.078)"><ellipse cx="30.57" cy="0" rx="5.60" ry="10.0" fill="url(#bg15)"/><rect x="30.57" y="-10.0" width="26.11" height="20" fill="url(#bg15)"/><rect x="55.67" y="-10.0" width="53.49" height="20" fill="url(#bg16)"/></g><circle cx="897" cy="273.2" r="25" fill="url(#gW)"/><circle cx="1167.3" cy="468.1" r="26.3" fill="url(#gW)"/><circle cx="974" cy="533" r="25" fill="url(#gW)"/></svg>
</body></html>
